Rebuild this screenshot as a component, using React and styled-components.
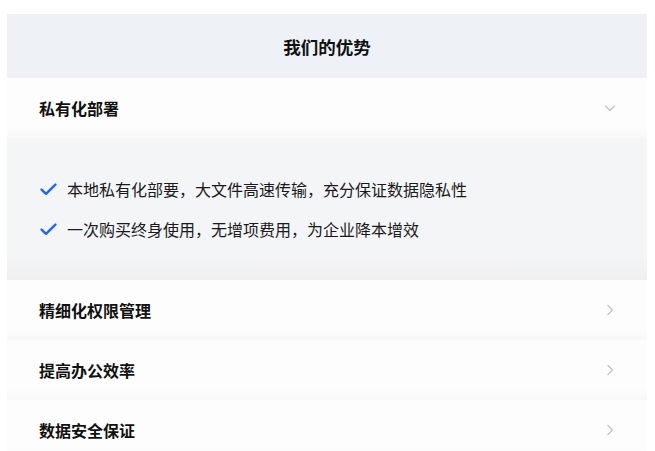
import styled, { createGlobalStyle } from "styled-components"

const GlobalStyle = createGlobalStyle`
  html, body {
    margin: 0;
    padding: 0;
    background: #ffffff;
  }
  body {
    font-family: "Noto Sans CJK SC", "Noto Sans", sans-serif;
  }
`

const Page = styled.div`
  padding: 14px 8px 0 7px;
  height: 451px;
  box-sizing: border-box;
  overflow: hidden;
`

const Panel = styled.section`
  width: 640px;
  display: flex;
  flex-direction: column;
`

const Header = styled.h2`
  margin: 0;
  height: 64px;
  display: flex;
  align-items: center;
  justify-content: center;
  background: #eef2f7;
  font-size: 17.5px;
  font-weight: 700;
  color: #111111;
`

const Row = styled.div`
  height: 60px;
  display: flex;
  align-items: center;
  justify-content: space-between;
  padding: 0 30px 0 32px;
  background: linear-gradient(180deg, #fdfdfd 0%, #fdfdfd 80%, #f8f8f8 100%);
`

const RowTitle = styled.span`
  font-size: 16px;
  font-weight: 700;
  color: #111111;
`

const Body = styled.div`
  padding: 40px 32px;
  display: flex;
  flex-direction: column;
  gap: 18px;
  background: linear-gradient(180deg, #f4f5f7 0%, #f4f5f7 82%, #efeff0 100%);
`

const Item = styled.div`
  height: 22px;
  display: flex;
  align-items: center;
  gap: 10px;
  padding-left: 1px;
  font-size: 16px;
  color: #1a1a1a;
`

const Check = () => (
  <svg width="17" height="13" viewBox="0 0 17 13" fill="none">
    <path d="M1.6 6.6 L6 10.8 L15.4 1.6" stroke="#2468f2" strokeWidth="2.5" strokeLinecap="round" strokeLinejoin="round" />
  </svg>
)

const Chevron = ({ open }) => (
  <svg width="14" height="14" viewBox="0 0 14 14" fill="none">
    <path
      d={open ? "M2.5 5 L7 9.5 L11.5 5" : "M5 2.5 L9.5 7 L5 11.5"}
      stroke="#c4c4c4"
      strokeWidth="1.3"
      strokeLinecap="round"
      strokeLinejoin="round"
    />
  </svg>
)

const sections = [
  {
    title: "私有化部署",
    open: true,
    items: [
      "本地私有化部要，大文件高速传输，充分保证数据隐私性",
      "一次购买终身使用，无增项费用，为企业降本增效",
    ],
  },
  { title: "精细化权限管理" },
  { title: "提高办公效率" },
  { title: "数据安全保证" },
]

export default function App() {
  return (
    <>
      <GlobalStyle />
      <Page>
        <Panel>
          <Header>我们的优势</Header>
          {sections.map((s) => (
            <div key={s.title}>
              <Row>
                <RowTitle>{s.title}</RowTitle>
                <Chevron open={s.open} />
              </Row>
              {s.open && (
                <Body>
                  {s.items.map((t) => (
                    <Item key={t}>
                      <Check />
                      {t}
                    </Item>
                  ))}
                </Body>
              )}
            </div>
          ))}
        </Panel>
      </Page>
    </>
  )
}
